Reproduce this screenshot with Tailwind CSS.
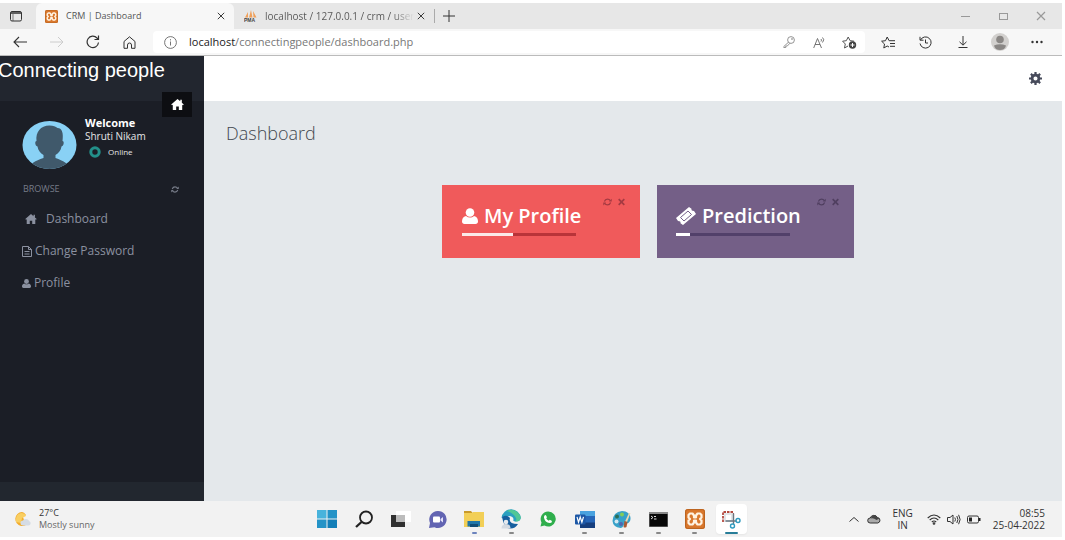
<!DOCTYPE html>
<html lang="en">
<head>
<meta charset="utf-8">
<title>CRM | Dashboard</title>
<script src="https://cdn.jsdelivr.net/npm/@tailwindcss/browser@4"></script>
</head>
<body class="flex h-screen flex-col bg-white py-[3px] pr-[3px] font-['Open_Sans','Noto_Sans',sans-serif] overflow-hidden">
<svg class="hidden">
  <symbol id="home" viewBox="0 0 16 14"><path fill="currentColor" d="M8 0 0 7l1 1 1-.8V14h4.300V9.500h3.400V14H14V7.200l1 .8 1-1-2.500-2.200V1h-2v2z"/></symbol>
  <symbol id="user" viewBox="0 0 16 16"><circle cx="8" cy="4.500" r="4.300" fill="currentColor"/><path fill="currentColor" d="M4 8C1 8.500 0 11 0 13.500 0 15 1 16 2.500 16h11c1.500 0 2.500-1 2.500-2.500C16 11 15 8.500 12 8c-2.500 2-5.500 2-8 0z"/></symbol>
  <symbol id="sync" viewBox="0 0 16 14"><path fill="none" stroke="currentColor" stroke-width="2.200" d="M2.500 6C3.500 3 5.500 1.800 8 1.800s4 1 5 2.700M13.500 8c-1 3-3 4.200-5.500 4.200s-4-1-5-2.700"/><path fill="currentColor" d="M15.500 1v5h-5zM.5 13V8h5z"/></symbol>
  <symbol id="cross" viewBox="0 0 10 10"><path fill="none" stroke="currentColor" stroke-width="1.200" d="m1 1 8 8M9 1 1 9"/></symbol>
  <symbol id="xampp" viewBox="0 0 20 20"><rect width="20" height="20" rx="2.500" fill="#d9782d"/><rect x=".6" y=".6" width="18.800" height="18.800" rx="2" fill="none" stroke="#b9631f"/><path fill="none" stroke="#fff3e2" stroke-width="2.200" stroke-linejoin="round" d="M5 4.500h2.500L9 6.500v2h2v-2l1.500-2H15l1.500 1.600v2.400L15 10l1.500 1.500v2.400L15 15.500h-2.500l-1.500-2v-2H9v2l-1.500 2H5l-1.500-1.600v-2.400L5 10 3.500 8.500V6.100z"/></symbol>
</svg>

<!-- Browser tabs -->
<div class="flex h-[26px] shrink-0 bg-[#e7e7e7]">
  <button aria-label="Tab actions" class="flex w-9 items-center justify-center text-[#333]"><svg class="mr-1 size-3" viewBox="0 0 12 12" fill="none" stroke="currentColor"><rect x=".5" y="1.500" width="11" height="9.500" rx="1.500"/><path stroke-width="1.500" d="M1 3h10"/><path stroke-width=".6" d="M3 4v7"/></svg></button>
  <div class="flex w-[198px] items-center rounded-t-md bg-[#f7f7f7] pr-[9px] pl-[9px]">
    <svg class="size-[13px]"><use href="#xampp"/></svg>
    <span class="ml-2 flex-1 text-[9px] text-[#555]">CRM | Dashboard</span>
    <button aria-label="Close tab" class="text-[#333]"><svg class="size-2"><use href="#cross"/></svg></button>
  </div>
  <div class="flex w-[200px] items-center pr-[9px] pl-[10px]">
    <svg class="h-[14px] w-[14px] shrink-0" viewBox="0 0 14 14"><path fill="#f0a05a" d="M1 8.500 4 3v5.500zM5 8.500 7 1l1.500 7.500zM9.500 8.500 9 2l3.500 6.500z"/><text x="0" y="13" font-size="5" font-weight="700" fill="#444" font-family="Liberation Sans">PMA</text></svg>
    <span class="ml-[7px] min-w-0 flex-1 whitespace-nowrap text-[10px] text-transparent"><span class="bg-linear-to-r from-[#555] from-85% to-[#e7e7e7] bg-clip-text">localhost / 127.0.0.1 / crm / user</span></span>
    <button aria-label="Close tab" class="text-[#333]"><svg class="size-2"><use href="#cross"/></svg></button>
  </div>
  <button aria-label="New tab" class="my-[6px] border-l border-[#aaa] pl-2 text-[#333]"><svg class="size-3" viewBox="0 0 12 12"><path stroke="currentColor" d="M6 0v12M0 6h12"/></svg></button>
  <div class="ml-auto flex pr-0.5 text-[#999]">
    <button aria-label="Minimize" class="flex w-[38px] items-center justify-center"><svg class="size-[9px]" viewBox="0 0 9 9"><path stroke="currentColor" d="M0 4.500h9"/></svg></button>
    <button aria-label="Maximize" class="flex w-[38px] items-center justify-center"><svg class="size-[9px]" viewBox="0 0 9 9"><rect x=".5" y="1.500" width="8" height="6" fill="none" stroke="currentColor"/></svg></button>
    <button aria-label="Close" class="flex w-[38px] items-center justify-center"><svg class="size-[10px]"><use href="#cross"/></svg></button>
  </div>
</div>

<!-- Browser toolbar -->
<div class="flex h-[27px] shrink-0 items-center border-b border-[#bbb] bg-[#f7f7f7] pl-px text-[#333]">
  <button aria-label="Back" class="flex w-[37px] justify-center"><svg class="h-3 w-[14px]" viewBox="0 0 14 12" fill="none" stroke="currentColor" stroke-width="1.100"><path d="M14 6H1M6 1 1 6l5 5"/></svg></button>
  <button aria-label="Forward" class="flex w-[37px] justify-center text-[#ccc]"><svg class="h-3 w-[14px]" viewBox="0 0 14 12" fill="none" stroke="currentColor"><path d="M0 6h13M8 1l5 5-5 5"/></svg></button>
  <button aria-label="Refresh" class="flex w-[36px] justify-center"><svg class="size-[14px]" viewBox="0 0 14 14" fill="none" stroke="currentColor" stroke-width="1.200"><path d="M12.500 7.500a5.700 5.700 0 1 1-1.500-4.500l1.500 1.500M12.500.5v4h-4"/></svg></button>
  <button aria-label="Home" class="flex w-[37px] justify-center"><svg class="size-[13px]" viewBox="0 0 13 13" fill="none" stroke="currentColor"><path d="M1 5.500 6.500.8 12 5.500v6.800H8.500V9a2 2 0 0 0-4 0v3.300H1z"/></svg></button>
  <div class="ml-[5px] flex h-[22px] flex-1 items-center rounded bg-white pl-[11px] text-[11px]">
    <svg class="size-[13px] shrink-0" viewBox="0 0 13 13" fill="none" stroke="#666" stroke-width=".9"><circle cx="6.500" cy="6.500" r="5.900"/><path d="M6.500 5.500v4M6.500 3.200v1.200"/></svg>
    <a href="#" class="ml-3 flex-1 text-[#777]"><span class="text-[#222]">localhost</span>/connectingpeople/dashboard.php</a>
    <button aria-label="Passwords" class="flex w-[30px] justify-center text-[#888]"><svg class="size-3" viewBox="0 0 12 12" fill="none" stroke="currentColor" stroke-width=".9"><circle cx="8" cy="4" r="3.400"/><path d="M5.500 6.200.8 10.500v1h2V10h1.500L7 7.200"/><circle cx="9" cy="3" r=".5"/></svg></button>
    <button aria-label="Read aloud" class="flex w-[30px] justify-center text-[#666]"><svg class="size-[13px]" viewBox="0 0 13 13" fill="none" stroke="currentColor" stroke-width=".9"><path d="M.7 12 4.500 2.500 8.500 12M2 8.500h5M8 3q1 1 0 2.500M9.500 1.500q2.500 2 0 5"/></svg></button>
    <button aria-label="Add to favorites" class="mr-px flex w-[30px] justify-center text-[#555]"><svg class="h-[13px] w-[15px]" viewBox="0 0 15 13" fill="none" stroke="currentColor"><path d="M6 10 2.500 12l.8-4L.6 5.200l3.700-.5L6.200 1l1.900 3.700 4 .5"/><circle cx="10.500" cy="9" r="3.700" fill="#444" stroke="none"/><path stroke="#fff" d="M10.500 7v4M8.500 9h4"/></svg></button>
  </div>
  <div class="ml-[5px] flex items-center">
    <button aria-label="Favorites" class="flex w-[37px] justify-center"><svg class="h-[13px] w-[15px]" viewBox="0 0 15 13" fill="none" stroke="currentColor"><path d="m8 11-1.800-1L2.800 12l.7-4L.6 5.200l3.900-.5L6.200 1l1.900 3.700H14M9 7.500h5M9 10.300h5"/></svg></button>
    <button aria-label="History" class="flex w-[37px] justify-center"><svg class="size-[13px]" viewBox="0 0 13 13" fill="none" stroke="currentColor"><path d="M1.500 4A5.600 5.600 0 1 1 1 7.500M1 .8V4.200h3.500M6.500 3.500V7H9"/></svg></button>
    <button aria-label="Downloads" class="flex w-[37px] justify-center"><svg class="size-3" viewBox="0 0 12 12" fill="none" stroke="currentColor"><path d="M6 0v9M2.500 5.800 6 9.200l3.500-3.400M1.500 11.500h9"/></svg></button>
    <button aria-label="Account" class="flex w-[37px] justify-center"><svg class="size-[18px]" viewBox="0 0 18 18"><circle cx="9" cy="9" r="9" fill="#d2d0ce"/><circle cx="9" cy="6.500" r="3.800" fill="#8a8785"/><path fill="#8a8785" d="M3 12.500q6-2.500 12 0-1 4.500-6 4.500t-6-4.500z"/></svg></button>
    <button aria-label="Settings and more" class="mr-[7px] flex w-[37px] justify-center"><svg class="h-1 w-3" viewBox="0 0 12 4" fill="currentColor"><circle cx="1.500" cy="2" r="1.200"/><circle cx="6" cy="2" r="1.200"/><circle cx="10.500" cy="2" r="1.200"/></svg></button>
  </div>
</div>

<!-- CRM application -->
<div class="flex min-h-0 flex-1">
  <aside class="flex w-[204px] shrink-0 flex-col bg-[#1b1e26] text-[#8b91a0]">
    <div class="h-[45px] bg-[#22262f]">
      <h1 class="-ml-0.5 whitespace-nowrap pt-0.5 font-['Liberation_Sans',sans-serif] text-[20px] leading-6 text-white">Connecting people</h1>
      <button aria-label="Home" class="mt-[10px] ml-[162px] flex h-[25px] w-[30px] items-center justify-center bg-[#0d0e12] text-white"><svg class="h-[11px] w-[13px]"><use href="#home"/></svg></button>
    </div>
    <div class="flex items-start pt-4 pl-[22px]">
      <svg class="mt-1 h-12 w-[55px]" viewBox="0 0 55 48"><defs><clipPath id="face"><ellipse cx="27.500" cy="24" rx="27" ry="24"/></clipPath></defs><g clip-path="url(#face)"><path fill="#89d1f5" d="M0 0h55v48H0z"/><path fill="#40596b" d="M14.500 20c-1-9 4-15.500 13-15.500 4 0 6 1 8 2.500 5 0 6 6 5 13 2 0 1.500 5-1 5.500-.5 4-3 6.500-6 8.500v3c8 3 13 5 14 11H7c1-6 6-8 14.500-11v-3c-3-2-5.500-4.500-6-8.500-2.500-.5-3-5.500-1-5.500z"/></g></svg>
      <div class="ml-2 text-[10px] leading-[14px] text-[#e6e6e6]">
        <h2 class="text-[11px] leading-3 font-bold text-white">Welcome</h2>
        <p>Shruti Nikam</p>
        <p class="mt-0.5 flex items-center pl-1 text-[8px]"><svg class="mr-[7px] size-3" viewBox="0 0 12 12"><circle cx="6" cy="6" r="4.200" fill="none" stroke="#23908a" stroke-width="3"/></svg>Online</p>
      </div>
    </div>
    <div class="mt-3 flex items-center justify-between pr-[25px] pl-[23px] text-[9px] leading-4 text-[#777c88]"><span>BROWSE</span><button aria-label="Refresh menu"><svg class="block h-[7px] w-2"><use href="#sync"/></svg></button></div>
    <nav class="flex flex-col pt-[6px] pl-[22px] text-[12px] leading-8">
      <a href="#" class="flex items-center pl-[3px]"><svg class="mr-[9px] h-[10px] w-3"><use href="#home"/></svg>Dashboard</a>
      <a href="#" class="flex items-center"><svg class="mr-[3px] h-[11px] w-[10px]" viewBox="0 0 10 11" fill="none" stroke="currentColor"><path d="M.5.500h6l3 3v7h-9zM6.500.5v3h3M2.500 5.500h5M2.500 8h5"/></svg>Change Password</a>
      <a href="#" class="flex items-center"><svg class="mr-[3px] h-[9px] w-[9px]"><use href="#user"/></svg>Profile</a>
    </nav>
    <div class="mt-auto h-[19px] bg-[#22272f]"></div>
  </aside>
  <div class="flex min-w-0 flex-1 flex-col bg-[#e4e8eb]">
    <header class="flex h-[45px] items-center justify-end bg-white pr-5">
      <button aria-label="Settings" class="text-[#474b5b]"><svg class="size-[13px]" viewBox="0 0 14 14" fill="none" stroke="currentColor"><circle cx="7" cy="7" r="3.700" stroke-width="3"/><path stroke-width="2.400" d="M7 0v2.500M7 11.500V14M0 7h2.500M11.500 7H14M2 2l1.800 1.800M10.200 10.200 12 12M12 2l-1.800 1.800M3.800 10.200 2 12"/></svg></button>
    </header>
    <main class="pt-5 pl-[22px]">
      <h2 class="text-[18px] font-light leading-6 text-[#42474f]">Dashboard</h2>
      <div class="mt-10 ml-[216px] flex gap-[17px] text-white">
        <section class="h-[73px] w-[198px] bg-[#f05a5b] pt-[13px] pr-[15px] pl-5">
          <div class="flex h-2 justify-end gap-[6px] text-[#a53a42]"><button aria-label="Reload My Profile"><svg class="h-2 w-[9px]"><use href="#sync"/></svg></button><button aria-label="Close My Profile"><svg class="h-2 w-[7px]" viewBox="0 0 7 7"><path stroke="currentColor" stroke-width="1.700" d="m.7.7 5.600 5.600M6.300.7.7 6.300"/></svg></button></div>
          <h3 class="-mt-0.5 flex items-center text-[20px] font-semibold leading-6"><svg class="mr-[6px] size-4"><use href="#user"/></svg>My Profile</h3>
          <div class="mt-[5px] h-[3px] w-[114px] bg-[#b93439]"><div class="h-full bg-[#fbe9e9]" style="width:45%"></div></div>
        </section>
        <section class="h-[73px] w-[197px] bg-[#745f87] pt-[13px] pr-[15px] pl-[19px]">
          <div class="flex h-2 justify-end gap-[6px] text-[#503f60]"><button aria-label="Reload Prediction"><svg class="h-2 w-[9px]"><use href="#sync"/></svg></button><button aria-label="Close Prediction"><svg class="h-2 w-[7px]" viewBox="0 0 7 7"><path stroke="currentColor" stroke-width="1.700" d="m.7.7 5.600 5.600M6.300.7.7 6.300"/></svg></button></div>
          <h3 class="-mt-0.5 flex items-center text-[20px] font-semibold leading-6"><svg class="mr-[6px] h-[18px] w-5" viewBox="0 0 20 18"><path fill="#fff" d="M0 11 13 0l2.500 1.800q-.5 2.200 2.500 2.200L20 7 7 18l-2.500-1.800Q5 14 2 14z"/><path fill="none" stroke="#745f87" d="m4.500 10.500 7.500-6.500 3.500 3.500L8 14z"/><path fill="#fff" d="m6 10.500 6-5 2 2-6 5z"/></svg>Prediction</h3>
          <div class="mt-[5px] h-[3px] w-[114px] bg-[#52406a]"><div class="h-full bg-white" style="width:12%"></div></div>
        </section>
      </div>
    </main>
  </div>
</div>

<!-- Windows taskbar -->
<footer class="flex h-9 shrink-0 items-center bg-[#f2f2f2] text-[9px] leading-[12px] text-[#333]">
  <button class="flex flex-1 items-center pl-[14px] text-left">
    <svg class="mr-2 size-[17px]" viewBox="0 0 17 17"><path fill="#f2ac2e" d="M8 1a7 7 0 1 0 7 9l-5-1-1-3 3-2Q10 1 8 1z"/><path fill="#f9cf62" d="M7 2q4 0 5 3L8 7l-1 5-5-1Q1 3 7 2z"/><path fill="#d5dce5" d="M9 14.500a2.500 2.500 0 0 1 0-5 3.500 3.500 0 0 1 6 .5 2.300 2.300 0 0 1-.5 4.500z"/></svg>
    <span>27°C<br><span class="text-[#666]">Mostly sunny</span></span>
  </button>
  <div class="grid h-full w-[441px] grid-cols-12 [&>button]:relative [&>button]:flex [&>button]:items-center [&>button]:justify-center [&_i]:absolute [&_i]:bottom-[3px] [&_i]:h-0.5 [&_i]:w-[5px] [&_i]:rounded-full [&_i]:bg-[#888]">
    <button aria-label="Start"><svg class="size-5" viewBox="0 0 20 20" fill="#2493c7"><path fill="#48b3dc" d="M0 1h9.500v8.500H0z"/><path d="M10.500 1H20v8.500h-9.500zM0 10.500h9.500V19H0z"/><path fill="#137fb8" d="M10.500 10.500H20V19h-9.500z"/></svg></button>
    <button aria-label="Search"><svg class="size-[18px]" viewBox="0 0 18 18" fill="none" stroke="#222" stroke-width="1.800"><circle cx="11" cy="7.500" r="6"/><path stroke-width="2.300" d="m6.500 12-5.500 5"/></svg></button>
    <button aria-label="Task view"><svg class="h-4 w-5" viewBox="0 0 20 16"><path fill="#fff" d="M5 0h15v11H5z"/><path fill="#303030" d="M0 4h14v12H0z"/><path fill="#bcbcbc" d="M5 4h9v7H5z"/></svg></button>
    <button aria-label="Chat"><svg class="size-[19px]" viewBox="0 0 19 19"><path fill="#6264b2" d="M10 1a8.500 8.500 0 1 1-3.500 16.200L1 18l1-5A8.500 8.500 0 0 1 10 1z"/><rect x="5" y="6.500" width="7" height="6" rx="1" fill="#fff"/><path fill="#e4e1fa" d="m12.500 9 2.500-2v5.500l-2.500-2z"/></svg></button>
    <button aria-label="File Explorer"><svg class="mb-px h-[17px] w-5" viewBox="0 0 20 17"><path fill="#c99a2b" d="M0 1h7l2 2.500H0z"/><path fill="#f2cf57" d="M0 3h8l1-1h11v15H0z"/><path fill="#2176a8" d="M3.500 11h12.500v5.500H3.500z"/><path fill="#124d76" d="M6 14h8v3H6z"/></svg><i class="!bg-[#6c83bd]"></i></button>
    <button aria-label="Microsoft Edge"><svg class="size-5" viewBox="0 0 20 20"><path fill="#2aa0c0" d="M.500 9A9.700 9.700 0 0 1 19.800 9Q19 13 14 12.500q-2.500-.5-1.500-2 0-3.500-5-3.500T.5 9z"/><path fill="#50c795" d="M5 2q10-4 14.800 6Q19.500 13 14 12.500q2-1 1-3.500Q12 3 5 2z"/><path fill="#155f9f" d="M1 8Q6 5 9 9q-2 6 8 6-3 5-8.500 4.500T1 8z"/><circle cx="5" cy="13" r="2.300" fill="#e5e9ee"/><path fill="#d4dae1" d="M.500 19.500q0-4.500 4.500-4.500t4.500 4.500z"/></svg><i></i></button>
    <button aria-label="WhatsApp"><svg class="size-4" viewBox="0 0 16 16"><path fill="#2fae4c" d="M8 .5a7.500 7.500 0 1 1-3.500 14L.5 15.500l1-4A7.500 7.500 0 0 1 8 .5z"/><path fill="#fff" d="m4.500 4.500 1.300-.5L7 6.300l-.8 1q1 1.800 2.600 2.400l1-1 2.200 1.200q0 2.200-2.500 2.200Q5 11.500 4 6.800q-.1-1.500.5-2.300z"/></svg></button>
    <button aria-label="Word"><svg class="h-[17px] w-5" viewBox="0 0 20 17"><rect x="5" width="15" height="17" rx="1.500" fill="#2666b8"/><path fill="#49a2df" d="M5 0h15v5H5z"/><path fill="#163f7e" d="M5 11.500h15V17H5z"/><rect y="3.500" width="10.500" height="10" rx="1" fill="#1c57a5"/><path fill="none" stroke="#fff" stroke-width="1.200" d="m2 5.800 1.500 5.400L5.200 6l1.700 5.200L8.500 5.800"/></svg><i></i></button>
    <button aria-label="Paint"><svg class="size-[19px]" viewBox="0 0 19 19"><path fill="#38a2c9" d="M10 1c5 0 9 3 8.500 8s-5 4.500-6 5-1 4-4 4Q1 17 .500 11 1 2 10 1z"/><circle cx="5" cy="6.500" r="2" fill="#2c6f58"/><circle cx="10" cy="4.500" r="2" fill="#85cd58"/><circle cx="4.500" cy="11.500" r="2" fill="#d5e9f3"/><circle cx="9" cy="14" r="2" fill="#5166b0"/><path fill="#f0d8b0" d="M17 3h1.500L15 12l-2-.5z"/><path fill="#a95a35" d="m12.500 11 3 1-1 5q-2 1-3 0z"/></svg><i></i></button>
    <button aria-label="Command Prompt"><svg class="h-[15px] w-[19px]" viewBox="0 0 19 15"><path fill="#888" d="M0 0h19v15H0z"/><path fill="#080808" d="M.5 2h18v12.500H.5z"/><path fill="none" stroke="#ddd" d="m2 4 2 1.500L2 7M5 7h2.500M5 4.500h2"/></svg><i></i></button>
    <button aria-label="XAMPP Control Panel"><svg class="size-5"><use href="#xampp"/></svg><i></i></button>
    <button aria-label="Snipping Tool" class="my-[3px] mx-[3px] rounded bg-white shadow-xs"><svg class="size-[19px]" viewBox="0 0 19 19" fill="none"><path stroke="#b44a40" stroke-width="1.800" stroke-dasharray="2.500 1" d="M1 12V2h10v4"/><path stroke="#e2e5e8" stroke-width="2" d="M3 4h7v7H3z"/><path stroke="#677680" stroke-width="1.400" d="m3.500 11 11 0M11.500 3.500V14"/><circle cx="16" cy="10.500" r="2" stroke="#2e9abf" stroke-width="1.400"/><circle cx="10.500" cy="16" r="2" stroke="#2e9abf" stroke-width="1.400"/></svg><i class="!bottom-0 !w-[13px] !bg-[#287d98]"></i></button>
  </div>
  <div class="flex flex-1 items-center justify-end pr-[17px] text-[10px]">
    <button aria-label="Show hidden icons" class="mr-2"><svg class="h-[6px] w-[10px]" viewBox="0 0 10 6" fill="none" stroke="#333"><path d="m.5 5.500 4.500-4 4.500 4"/></svg></button>
    <button aria-label="OneDrive" class="mr-[11px]"><svg class="h-[10px] w-[14px]" viewBox="0 0 14 10"><path fill="#aaa" stroke="#333" d="M3.200 9a2.500 2.500 0 0 1 0-5A4 4 0 0 1 10.500 3.500a2.800 2.800 0 0 1 .3 5.500z"/><path fill="#444" d="M3.500 4.500q3-1 6 1.500l3-1.500-2-1Q7-2 3.500 4.500z"/></svg></button>
    <button class="mr-[14px] text-center">ENG<br>IN</button>
    <button aria-label="Network, volume and battery" class="mr-3 flex items-center gap-[6px]"><svg class="h-[11px] w-[14px]" viewBox="0 0 14 11" fill="none" stroke="#333" stroke-width="1.100"><path d="M.7 4q6.300-6 12.600 0M2.700 6q4.300-4 8.600 0M4.800 8q2.200-2 4.400 0"/><circle cx="7" cy="9.500" r=".8"/></svg><svg class="h-[11px] w-[14px]" viewBox="0 0 14 11" fill="none" stroke="#333"><path d="M.5 3.500h2.500L6 1v9L3 7.500H.5zM7.800 3.500q1.300 2 0 4M9.800 2q2.300 3.500 0 7M11.600.8q3 4.700 0 9.400"/></svg><svg class="h-[9px] w-[14px]" viewBox="0 0 14 9"><rect x=".5" y="1" width="11" height="7" rx="1.500" fill="none" stroke="#333"/><path fill="#222" d="M2 2.500h3v4H2zM12 3h1.500v3H12z"/></svg></button>
    <button class="text-right">08:55<br>25-04-2022</button>
  </div>
</footer>
</body>
</html>
